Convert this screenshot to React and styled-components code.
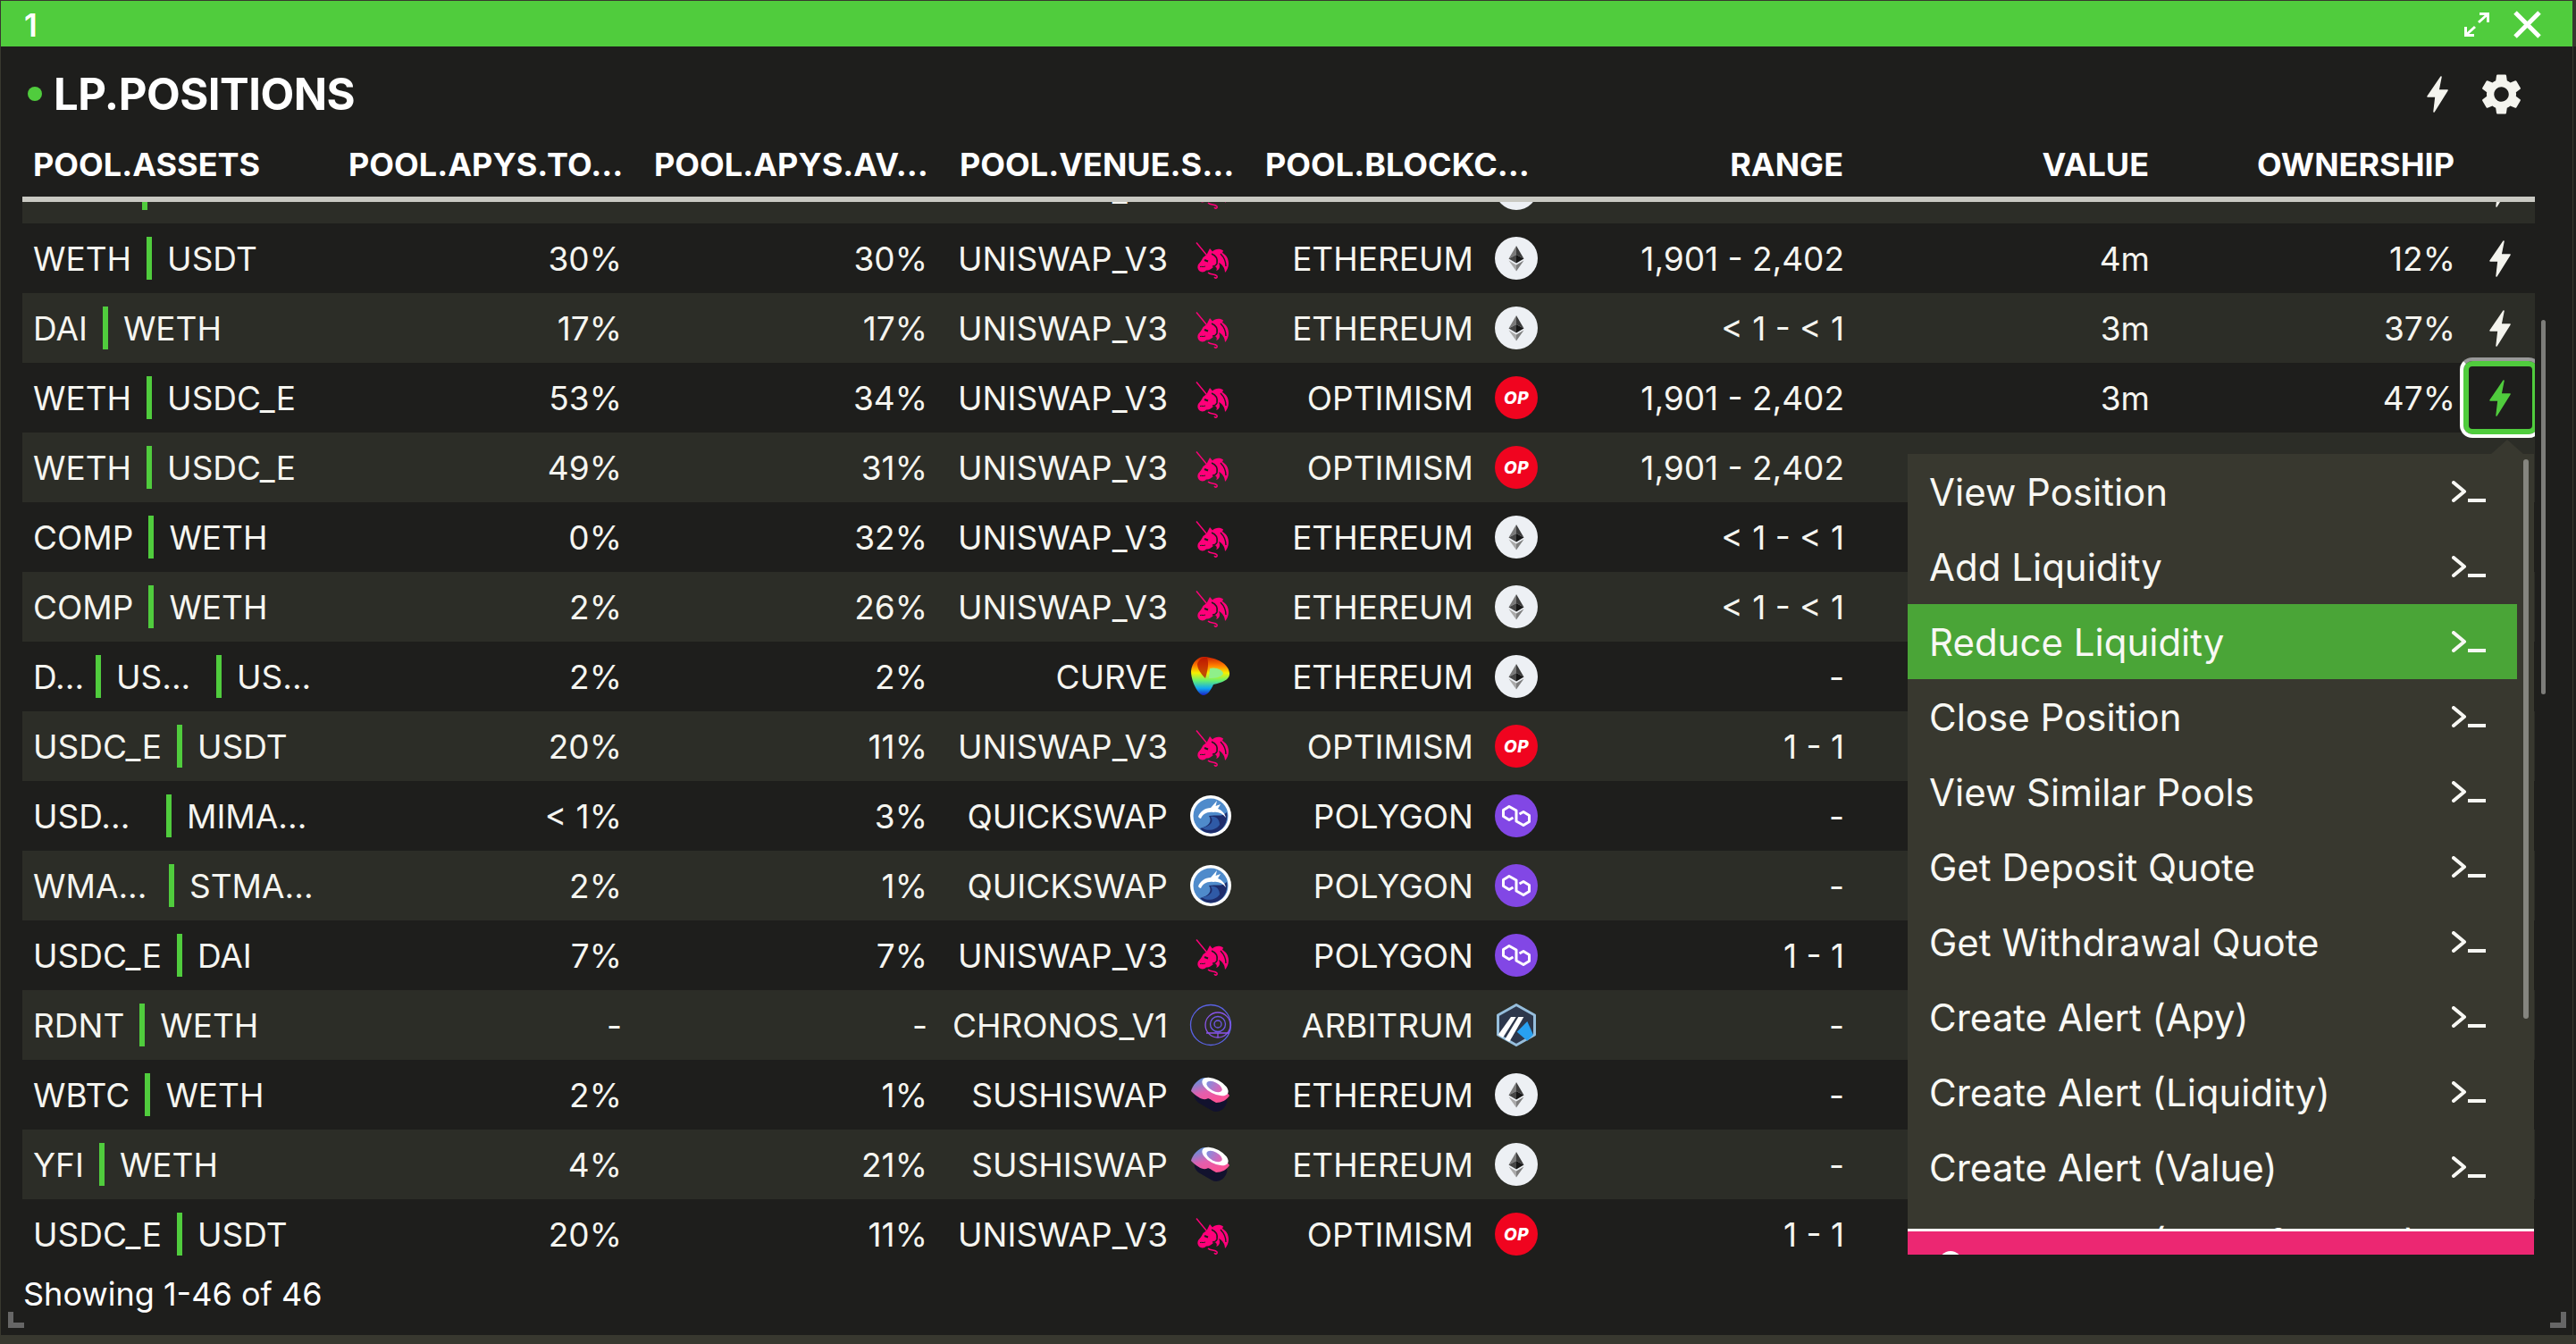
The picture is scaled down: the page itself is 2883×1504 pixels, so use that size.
import React from "react";
import styled, { createGlobalStyle } from "styled-components";
import { MdSettings } from "react-icons/md";

const GREEN = "#50cc3d";
const COLUMNS = "353px repeat(7, 342px) 65px";

const Global = createGlobalStyle`
  html, body {
    margin: 0;
    background: #38382f;
    font-family: Inter, "Liberation Sans", sans-serif;
  }
`;

const Page = styled.div`
  width: 2883px;
  height: 1504px;
  box-sizing: border-box;
  padding: 1px 0 10px 1px;
  display: flex;
  flex-direction: column;
  overflow: hidden;
  color: #f5f5f0;
`;

const TitleBar = styled.div`
  flex: none;
  width: 2878px;
  height: 51px;
  box-sizing: border-box;
  padding: 2px 35px 0 26px;
  background: ${GREEN};
  display: flex;
  align-items: center;
  justify-content: space-between;
  color: #fff;
  font-size: 35px;
  font-weight: 600;
`;

const WindowIcons = styled.div`
  display: flex;
  align-items: center;
  gap: 27px;
  svg { display: block; }
`;

const Panel = styled.div`
  position: relative;
  flex: 1;
  min-height: 0;
  box-sizing: border-box;
  padding: 0 46px 0 24px;
  background: #1e1e1c;
  display: flex;
  flex-direction: column;
  &::after {
    content: "";
    position: absolute;
    left: 2878px;
    top: 0;
    bottom: 0;
    width: 1px;
    background: #38382f;
  }
`;

const Heading = styled.div`
  flex: none;
  height: 88px;
  box-sizing: border-box;
  display: flex;
  align-items: center;
  justify-content: space-between;
  padding: 18px 10px 0 6px;
`;

const Title = styled.h1`
  margin: 0;
  display: flex;
  align-items: center;
  gap: 13px;
  font-size: 49px;
  line-height: 1;
  font-weight: 700;
  letter-spacing: -0.5px;
  color: #fff;
  &::before {
    content: "";
    width: 16px;
    height: 16px;
    border-radius: 50%;
    background: ${GREEN};
  }
`;

const Tools = styled.div`
  display: flex;
  align-items: center;
  gap: 32px;
  color: #f4f4ee;
`;

const GridRow = styled.div`
  display: grid;
  grid-template-columns: ${COLUMNS};
  align-items: center;
`;

const HeadRow = styled(GridRow)`
  flex: none;
  height: 80px;
  box-sizing: border-box;
  padding-top: 8px;
`;

const HeadCell = styled.div`
  padding: 0 25px 0 12px;
  font-size: 36px;
  font-weight: 700;
  color: #fff;
  white-space: nowrap;
  text-align: ${(p) => (p.$right ? "right" : "left")};
`;

const HeadRule = styled.div`
  flex: none;
  height: 6px;
  background: #c9c9c2;
`;

const Body = styled.div`
  flex: none;
  height: 1194px;
  overflow: hidden;
`;

/* list is scrolled a little, the first row is cut by the header */
const RowList = styled.div`
  margin-top: -54px;
`;

const Row = styled(GridRow)`
  height: 78px;
  background: #1e1e1c;
  &:nth-child(odd) { background: #2c2d27; }
`;

const Cell = styled.div`
  position: relative;
  box-sizing: border-box;
  padding: 0 24px 0 12px;
  font-size: 37px;
  white-space: nowrap;
  text-align: right;
`;

const Assets = styled(Cell)`
  display: flex;
  align-items: center;
  gap: 17px;
  text-align: left;
`;

const Asset = styled.span`
  flex: none;
  width: ${(p) => (p.$w ? `${p.$w}px` : "auto")};
`;

const Divider = styled.i`
  flex: none;
  width: 6px;
  height: 48px;
  background: ${GREEN};
`;

const LogoCell = styled(Cell)`
  display: flex;
  align-items: center;
  justify-content: flex-end;
  gap: 24px;
  padding-right: 25px;
`;

const LogoBox = styled.span`
  flex: none;
  width: 48px;
  height: 48px;
  display: flex;
  align-items: center;
  justify-content: center;
  svg { display: block; }
`;

const OpBadge = styled(LogoBox)`
  border-radius: 50%;
  background: #f0041f;
  color: #fff;
  font-size: 19px;
  font-weight: 800;
  font-style: italic;
  letter-spacing: 0.5px;
`;

const ActionCell = styled.div`
  position: relative;
  z-index: ${(p) => (p.$active ? 2 : 0)};
  height: 78px;
  display: flex;
  align-items: center;
  justify-content: center;
  padding-right: 13px;
  color: ${(p) => (p.$active ? GREEN : "#f4f4ee")};
  &::before {
    content: ${(p) => (p.$active ? '""' : "none")};
    position: absolute;
    inset: -6px -7px -6px -19px;
    border: 4px solid #fff;
    border-top-color: #999;
    border-radius: 14px;
    box-shadow: inset 0 0 0 6px ${GREEN};
  }
`;

const Bolt = styled.svg`
  position: relative;
  display: block;
  fill: currentColor;
  stroke: currentColor;
  stroke-width: 1.5;
  stroke-linejoin: round;
`;

const Status = styled.div`
  flex: none;
  height: 74px;
  padding-top: 8px;
  box-sizing: border-box;
  font-size: 36px;
  line-height: 40px;
  color: #fff;
  margin-left: 1px;
`;

const ResizeGrip = styled.i`
  position: absolute;
  bottom: 8px;
  width: 18px;
  height: 18px;
  box-sizing: border-box;
  border-bottom: 6px solid #666;
  ${(p) => (p.$right ? "left: 2853px; border-right: 6px solid #666;" : "left: 8px; border-left: 6px solid #666;")}
`;

const ScrollThumb = styled.i`
  position: absolute;
  left: 2843px;
  top: 306px;
  width: 5px;
  height: 419px;
  border-radius: 3px;
  background: #7d7d7a;
`;

const Menu = styled.div`
  position: absolute;
  left: 2134px;
  top: 456px;
  width: 701px;
  height: 896px;
  background: #38382f;
  display: flex;
  flex-direction: column;
  z-index: 3;
  &::before {
    content: "";
    position: absolute;
    left: 653px;
    top: -16px;
    border-left: 18px solid transparent;
    border-right: 18px solid transparent;
    border-bottom: 16px solid #38382f;
  }
`;

const MenuList = styled.div`
  flex: 1;
  min-height: 0;
  overflow: hidden;
  padding-right: 19px;
`;

const MenuItem = styled.div`
  height: 84px;
  box-sizing: border-box;
  padding: 0 35px 0 24px;
  display: flex;
  align-items: center;
  justify-content: space-between;
  font-size: 42px;
  color: #f8f8f4;
  background: ${(p) => (p.$active ? "#4aa537" : "transparent")};
`;

const MenuThumb = styled.i`
  position: absolute;
  left: 689px;
  top: 6px;
  width: 6px;
  height: 626px;
  border-radius: 3px;
  background: #85857f;
`;

const MenuFooter = styled.div`
  flex: none;
  height: 29px;
  box-sizing: border-box;
  border-top: 3px solid #fff;
  background: #ec2772;
  overflow: hidden;
  padding: 22px 0 0 35px;
`;

const FooterDot = styled.i`
  display: block;
  width: 26px;
  height: 26px;
  border-radius: 50%;
  background: #fff;
`;

function BoltIcon({ w = 24, h = 41 }) {
  return (
    <Bolt width={w} height={h} viewBox="0 0 24 41">
      <polygon points="16,1 1,23 10,23 8,40 23,16 13,16" />
    </Bolt>
  );
}

function ExpandIcon() {
  return (
    <svg width="28" height="27" viewBox="0 0 28 27" fill="none" stroke="#fff" strokeWidth="3">
      <path d="M16 11 L26 2 M17 1.5 H26.5 V11" />
      <path d="M12 16 L2 25 M11 25.5 H1.5 V16" />
    </svg>
  );
}

function CloseIcon() {
  return (
    <svg width="31" height="31" viewBox="0 0 31 31" stroke="#fff" strokeWidth="5">
      <path d="M2 2 L29 29 M29 2 L2 29" />
    </svg>
  );
}

function PromptIcon() {
  return (
    <svg width="38" height="24" viewBox="0 0 38 24" fill="none" stroke="currentColor" strokeWidth="4" style={{ display: "block" }}>
      <path d="M2 2 L14 12 L2 22" strokeLinejoin="round" strokeLinecap="round" />
      <path d="M18 22 H38" />
    </svg>
  );
}

function Uniswap() {
  return (
    <LogoBox>
      <svg width="48" height="48" viewBox="0 0 48 48">
        <path d="M8 6.5 L19.5 20.5" stroke="#ff007a" strokeWidth="1.4" />
        <path
          fill="#ff007a"
          d="M15.5 23 L19.5 20 L23 13 L26 16.5 C29 13 35 13 38 15.5 L37 18 C41 20 44 24 44 30 C44 34 42 38 40 40 C40 35 37 31 33 29 C35 33 34 37 30 38 C32 36 30 33 28 33 C25 36 22 38 19 37.5 C17 40 13 40 11 38 C9 36 9 33 10 31 C12 29 14 26 15.5 23 Z"
        />
        <path d="M21 40 C24 43 29 41 31 44 C32 46 29 47 28 45" fill="none" stroke="#ff007a" strokeWidth="1.5" />
        <path d="M17 26 L21 27.5" stroke="#1e1e1c" strokeWidth="2" />
        <path d="M25 19 C30 21 32 25 31 30 C30 32 28 33 26 33" fill="none" stroke="#1e1e1c" strokeWidth="1.6" />
        <path d="M35 19 C39 23 41 28 41 33" fill="none" stroke="#1e1e1c" strokeWidth="1.4" />
        <path d="M12 33.5 C14 33 16 34 18 33" fill="none" stroke="#1e1e1c" strokeWidth="1" />
      </svg>
    </LogoBox>
  );
}

function Curve() {
  return (
    <LogoBox>
      <svg width="48" height="48" viewBox="0 0 48 48">
        <defs>
          <linearGradient id="curveFill" x1="0" y1="0" x2="0" y2="1">
            <stop offset="0" stopColor="#c81e00" />
            <stop offset="0.22" stopColor="#ff7a00" />
            <stop offset="0.42" stopColor="#f6f000" />
            <stop offset="0.62" stopColor="#66f070" />
            <stop offset="0.82" stopColor="#10a8f0" />
            <stop offset="1" stopColor="#1a20c8" />
          </linearGradient>
        </defs>
        <path d="M2 18 C3 8 10 2 16 2 C26 2 44 8 45 20 C46 28 36 31 27 33 C24 40 20 45 16 45 C10 45 2 30 2 18Z" fill="url(#curveFill)" />
        <path d="M9 10 C11 4 16 2 20 3 C22 9 21 16 18 26 C14 22 9 16 9 10Z" fill="#b41400" opacity="0.75" />
        <path d="M23 15 C30 13 38 17 38 21 C36 25 29 26 22 26Z" fill="#8ff08a" />
      </svg>
    </LogoBox>
  );
}

function Quickswap() {
  return (
    <LogoBox>
      <svg width="48" height="48" viewBox="0 0 48 48">
        <circle cx="24" cy="24" r="23" fill="#fff" />
        <circle cx="24" cy="24" r="19.5" fill="#4f8bcb" />
        <path d="M12 38 C22 36 26 30 22 24 C30 22 36 26 42 20 C44 30 38 43 24 43.5 C19 43.5 15 41 12 38Z" fill="#1d2c6b" />
        <path d="M14 37 C24 36 28 30 24 25 C30 24 34 28 34 34 C30 40 20 42 14 37Z" fill="#2f5aa6" />
        <path d="M10 25 C12 19 18 15 24 15 L31 7 L29.5 13 L35 11 L32 16 C37 18 40 22 41 26 C37 21 32 19 27 20 C20 19 15 22 13 27 C12 27 11 26 10 25Z" fill="#fff" />
      </svg>
    </LogoBox>
  );
}

function Chronos() {
  return (
    <LogoBox>
      <svg width="48" height="48" viewBox="0 0 48 48" fill="none" stroke="#6f58e6" strokeWidth="1.3">
        <circle cx="24" cy="24" r="22.5" stroke="#5a62e4" />
        <circle cx="32" cy="24" r="14" stroke="#8a54ea" />
        <circle cx="32" cy="23" r="8.5" />
        <circle cx="32" cy="23" r="4" />
        <path d="M19 33 H45 M32 33 V38" stroke="#8a54ea" />
      </svg>
    </LogoBox>
  );
}

function Sushi() {
  return (
    <LogoBox>
      <svg width="48" height="48" viewBox="0 0 48 48">
        <defs>
          <linearGradient id="sushiFill" x1="0" y1="0" x2="0.5" y2="1">
            <stop offset="0" stopColor="#3f9fe8" />
            <stop offset="0.6" stopColor="#e25fae" />
            <stop offset="1" stopColor="#fa5296" />
          </linearGradient>
          <linearGradient id="sushiCore" x1="0" y1="0" x2="1" y2="0">
            <stop offset="0" stopColor="#7f8fe0" />
            <stop offset="1" stopColor="#e85fb0" />
          </linearGradient>
        </defs>
        <rect x="5" y="15" width="38" height="24" rx="11" transform="rotate(30 24 27)" fill="#12122e" />
        <path d="M17 5 C11 5 3 14 2 20 C8 26 14 30 19 29 C22 27 24 30 30 33 C36 33 42 30 45 25 C36 12 26 5 17 5Z" fill="url(#sushiFill)" />
        <ellipse cx="29" cy="15" rx="16" ry="8" transform="rotate(28 29 15)" fill="#fff" />
        <ellipse cx="28" cy="15" rx="9.5" ry="4.8" transform="rotate(28 28 15)" fill="url(#sushiCore)" />
      </svg>
    </LogoBox>
  );
}

function Ethereum() {
  return (
    <LogoBox>
      <svg width="48" height="48" viewBox="0 0 48 48">
        <circle cx="24" cy="24" r="24" fill="#edf0f4" />
        <polygon points="24,10 15.5,24.5 24,20" fill="#7a7a7a" />
        <polygon points="24,10 32.5,24.5 24,20" fill="#3c3c3c" />
        <polygon points="15.5,24.5 24,20 24,29.5" fill="#454545" />
        <polygon points="32.5,24.5 24,20 24,29.5" fill="#161616" />
        <polygon points="15.5,26.5 24,31.5 24,38.5" fill="#a9a9a9" />
        <polygon points="32.5,26.5 24,31.5 24,38.5" fill="#7c7c7c" />
      </svg>
    </LogoBox>
  );
}

function Optimism() {
  return <OpBadge>OP</OpBadge>;
}

function Polygon() {
  return (
    <LogoBox>
      <svg width="48" height="48" viewBox="0 0 48 48" fill="none">
        <circle cx="24" cy="24" r="24" fill="#8247e5" />
        <g stroke="#fff" strokeWidth="3" strokeLinejoin="round">
          <path d="M24 24 V18 L16 13.5 L9.5 17.5 V24.5 L16 28.5 L20.5 26" />
          <path d="M24 24 V30 L32 34.5 L38.5 30.5 V23.5 L32 19.5 L27.5 22" />
        </g>
      </svg>
    </LogoBox>
  );
}

function Arbitrum() {
  return (
    <LogoBox>
      <svg width="48" height="48" viewBox="0 0 48 48">
        <polygon points="24,1.5 44.5,13 44.5,35 24,46.5 3.5,35 3.5,13" fill="#2d374b" stroke="#96bedc" strokeWidth="3" strokeLinejoin="round" />
        <polygon points="24.7,31.7 36.3,20 43,35 36.3,41.7" fill="#28a0f0" />
        <polygon points="18,15 3.7,35 9,38.3 23.7,15" fill="#fff" />
        <polygon points="26.3,15 11.3,40 16.3,42.7 32.3,15" fill="#fff" />
      </svg>
    </LogoBox>
  );
}

const VENUE = {
  UNISWAP_V3: Uniswap,
  CURVE: Curve,
  QUICKSWAP: Quickswap,
  CHRONOS_V1: Chronos,
  SUSHISWAP: Sushi,
};

const CHAIN = {
  ETHEREUM: Ethereum,
  OPTIMISM: Optimism,
  POLYGON: Polygon,
  ARBITRUM: Arbitrum,
};

const rows = [
  { assets: [["AAVE", 105], ["WETH"]], total: "", avg: "", venue: "UNISWAP_V3", chain: "ETHEREUM", range: "", value: "", own: "", bolt: true },
  { assets: [["WETH"], ["USDT"]], total: "30%", avg: "30%", venue: "UNISWAP_V3", chain: "ETHEREUM", range: "1,901 - 2,402", value: "4m", own: "12%", bolt: true },
  { assets: [["DAI"], ["WETH"]], total: "17%", avg: "17%", venue: "UNISWAP_V3", chain: "ETHEREUM", range: "< 1 - < 1", value: "3m", own: "37%", bolt: true },
  { assets: [["WETH"], ["USDC_E"]], total: "53%", avg: "34%", venue: "UNISWAP_V3", chain: "OPTIMISM", range: "1,901 - 2,402", value: "3m", own: "47%", bolt: true, active: true },
  { assets: [["WETH"], ["USDC_E"]], total: "49%", avg: "31%", venue: "UNISWAP_V3", chain: "OPTIMISM", range: "1,901 - 2,402" },
  { assets: [["COMP"], ["WETH"]], total: "0%", avg: "32%", venue: "UNISWAP_V3", chain: "ETHEREUM", range: "< 1 - < 1" },
  { assets: [["COMP"], ["WETH"]], total: "2%", avg: "26%", venue: "UNISWAP_V3", chain: "ETHEREUM", range: "< 1 - < 1" },
  { assets: [["D...", 53], ["US...", 95], ["US..."]], total: "2%", avg: "2%", venue: "CURVE", chain: "ETHEREUM", range: "-" },
  { assets: [["USDC_E"], ["USDT"]], total: "20%", avg: "11%", venue: "UNISWAP_V3", chain: "OPTIMISM", range: "1 - 1" },
  { assets: [["USD...", 132], ["MIMA..."]], total: "< 1%", avg: "3%", venue: "QUICKSWAP", chain: "POLYGON", range: "-" },
  { assets: [["WMA...", 135], ["STMA..."]], total: "2%", avg: "1%", venue: "QUICKSWAP", chain: "POLYGON", range: "-" },
  { assets: [["USDC_E"], ["DAI"]], total: "7%", avg: "7%", venue: "UNISWAP_V3", chain: "POLYGON", range: "1 - 1" },
  { assets: [["RDNT"], ["WETH"]], total: "-", avg: "-", venue: "CHRONOS_V1", chain: "ARBITRUM", range: "-" },
  { assets: [["WBTC"], ["WETH"]], total: "2%", avg: "1%", venue: "SUSHISWAP", chain: "ETHEREUM", range: "-" },
  { assets: [["YFI"], ["WETH"]], total: "4%", avg: "21%", venue: "SUSHISWAP", chain: "ETHEREUM", range: "-" },
  { assets: [["USDC_E"], ["USDT"]], total: "20%", avg: "11%", venue: "UNISWAP_V3", chain: "OPTIMISM", range: "1 - 1" },
];

const menuItems = [
  "View Position",
  "Add Liquidity",
  "Reduce Liquidity",
  "Close Position",
  "View Similar Pools",
  "Get Deposit Quote",
  "Get Withdrawal Quote",
  "Create Alert (Apy)",
  "Create Alert (Liquidity)",
  "Create Alert (Value)",
  "Create Alert (Out Of Range)",
];

function PositionRow({ row }) {
  const Venue = VENUE[row.venue];
  const Chain = CHAIN[row.chain];
  return (
    <Row>
      <Assets>
        {row.assets.map(([name, w], i) => (
          <React.Fragment key={i}>
            {i > 0 && <Divider />}
            <Asset $w={w}>{name}</Asset>
          </React.Fragment>
        ))}
      </Assets>
      <Cell>{row.total}</Cell>
      <Cell>{row.avg}</Cell>
      <LogoCell>{row.venue}<Venue /></LogoCell>
      <LogoCell>{row.chain}<Chain /></LogoCell>
      <Cell>{row.range}</Cell>
      <Cell>{row.value}</Cell>
      <Cell>{row.own}</Cell>
      <ActionCell $active={row.active}>{row.bolt && <BoltIcon />}</ActionCell>
    </Row>
  );
}

export default function App() {
  return (
    <Page>
      <Global />
      <TitleBar>
        <span>1</span>
        <WindowIcons>
          <ExpandIcon />
          <CloseIcon />
        </WindowIcons>
      </TitleBar>
      <Panel>
        <Heading>
          <Title>LP.POSITIONS</Title>
          <Tools>
            <BoltIcon />
            <MdSettings size={55} />
          </Tools>
        </Heading>
        <HeadRow>
          <HeadCell>POOL.ASSETS</HeadCell>
          <HeadCell>POOL.APYS.TO…</HeadCell>
          <HeadCell>POOL.APYS.AV…</HeadCell>
          <HeadCell>POOL.VENUE.S…</HeadCell>
          <HeadCell>POOL.BLOCKC…</HeadCell>
          <HeadCell $right>RANGE</HeadCell>
          <HeadCell $right>VALUE</HeadCell>
          <HeadCell $right>OWNERSHIP</HeadCell>
          <span />
        </HeadRow>
        <HeadRule />
        <Body>
          <RowList>
            {rows.map((row, i) => <PositionRow key={i} row={row} />)}
          </RowList>
        </Body>
        <Status>Showing 1-46 of 46</Status>
        <ResizeGrip />
        <ResizeGrip $right />
        <ScrollThumb />
        <Menu>
          <MenuList>
            {menuItems.map((label) => (
              <MenuItem key={label} $active={label === "Reduce Liquidity"}>
                {label}
                <PromptIcon />
              </MenuItem>
            ))}
          </MenuList>
          <MenuThumb />
          <MenuFooter><FooterDot /></MenuFooter>
        </Menu>
      </Panel>
    </Page>
  );
}
